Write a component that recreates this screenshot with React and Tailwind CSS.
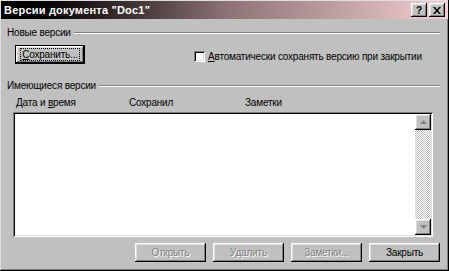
import React from "react";

const raised =
  "bg-[#c0c0c0] shadow-[inset_-1px_-1px_#000,inset_1px_1px_#fff,inset_-2px_-2px_#808080,inset_2px_2px_#dfdfdf]";
const sunken =
  "shadow-[inset_1px_1px_#808080,inset_-1px_-1px_#fff,inset_2px_2px_#000,inset_-2px_-2px_#dfdfdf]";

const Legend = ({ children }) => (
  <div className="flex items-center h-[13px] pr-[2px]">
    <span className="whitespace-nowrap">{children}</span>
    <div className="flex-1 ml-[3px] border-t border-t-[#808080] border-b border-b-white" />
  </div>
);

const DlgButton = ({ children, disabled }) => (
  <button
    className={`w-[71px] h-[19px] flex items-center justify-center ${raised} ${
      disabled ? "text-[#808080] [text-shadow:1px_1px_#fff]" : "text-black"
    }`}
  >
    {children}
  </button>
);

const Arrow = ({ down }) => (
  <div className={`w-[16px] h-[16px] flex items-center justify-center ${raised}`}>
    <svg width="7" height="4" viewBox="0 0 7 4" className={down ? "rotate-180" : ""}>
      <path d="M3.5 0 L7 4 L0 4 Z" fill="#808080" />
    </svg>
  </div>
);

export default function App() {
  return (
    <div className="w-[449px] h-[271px] bg-[#c0c0c0] p-[1px] font-['Liberation_Sans',Arial,sans-serif] text-[10px] leading-[13px] tracking-[-0.2px] text-black shadow-[inset_-1px_-1px_#000,inset_1px_1px_#dfdfdf,inset_-2px_-2px_#808080] overflow-hidden">
      {/* title bar */}
      <div className="h-[18px] flex items-center pl-[3px] pr-[3px] bg-gradient-to-r from-[#000000] via-[#8c7274] to-[#f3cfd3]">
        <span className="flex-1 text-white font-bold text-[11px] tracking-[0.2px]">
          Версии документа "Doc1"
        </span>
        <div className={`w-[16px] h-[14px] flex items-center justify-center font-bold text-[10px] ${raised}`}>
          ?
        </div>
        <div className={`w-[16px] h-[14px] ml-[2px] flex items-center justify-center ${raised}`}>
          <svg width="8" height="7" viewBox="0 0 8 7">
            <path d="M0 0h2l2 2.5L6 0h2L5 3.5 8 7H6L4 4.5 2 7H0l3-3.5z" fill="#000" />
          </svg>
        </div>
      </div>

      <div className="px-[6px]">
        {/* new versions */}
        <div className="mt-[7px]">
          <Legend>Новые версии</Legend>
        </div>
        <div className="flex items-start mt-[6px]">
          <button className="ml-[8px] w-[70px] h-[19px] border border-black p-0">
            <div className={`w-full h-full flex items-center justify-center ${raised}`}>
              <span className="outline outline-1 outline-dotted outline-black px-[1px] leading-[11px]">
                <u>С</u>охранить...
              </span>
            </div>
          </button>
          <div className="ml-[109px] mt-[5px] flex items-center">
            <div className={`w-[11px] h-[11px] bg-white ${sunken}`} />
            <span className="ml-[3px] whitespace-nowrap">
              <u>А</u>втоматически сохранять версию при закрытии
            </span>
          </div>
        </div>

        {/* existing versions */}
        <div className="mt-[15px]">
          <Legend>Имеющиеся версии</Legend>
        </div>
        <div className="flex mt-[4px] ml-[9px]">
          <span className="w-[113px]">
            Дата и <u>в</u>ремя
          </span>
          <span className="w-[116px]">Сохранил</span>
          <span>Заметки</span>
        </div>
        <div className={`mt-[3px] ml-[6px] w-[420px] h-[125px] bg-white p-[2px] flex justify-end ${sunken}`}>
          <div className="w-[16px] h-full flex flex-col">
            <Arrow />
            <div className="flex-1 bg-[repeating-conic-gradient(#c0c0c0_0%_25%,#ffffff_0%_50%)] bg-[length:2px_2px]" />
            <Arrow down />
          </div>
        </div>

        {/* buttons */}
        <div className="flex justify-end gap-[7px] mt-[6px] mr-[2px]">
          <DlgButton disabled>Открыть</DlgButton>
          <DlgButton disabled>Удалить</DlgButton>
          <DlgButton disabled>Заметки...</DlgButton>
          <DlgButton>Закрыть</DlgButton>
        </div>
      </div>
    </div>
  );
}
